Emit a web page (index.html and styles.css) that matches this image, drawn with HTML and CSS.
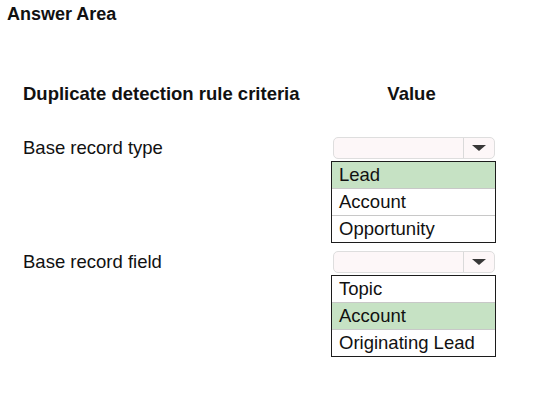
FILE: index.html
```html
<!DOCTYPE html>
<html>
<head>
    <title>Answer Area</title>
    <link rel="stylesheet" href="styles.css">
</head>
<body>
    <h1 class="answer-title">Answer Area</h1>

    <div class="criteria">
        <div class="criteria-head">Duplicate detection rule criteria</div>
        <div class="criteria-head value-head">Value</div>

        <div class="criteria-label">Base record type</div>
        <div class="picker">
            <div class="picker-box">
                <span class="picker-arrow"></span>
            </div>
            <ul class="picker-list">
                <li class="selected">Lead</li>
                <li>Account</li>
                <li>Opportunity</li>
            </ul>
        </div>

        <div class="criteria-label">Base record field</div>
        <div class="picker">
            <div class="picker-box">
                <span class="picker-arrow"></span>
            </div>
            <ul class="picker-list">
                <li>Topic</li>
                <li class="selected">Account</li>
                <li>Originating Lead</li>
            </ul>
        </div>
    </div>
</body>
</html>
```

FILE: styles.css
```css
body {
    margin: 0;
    font-family: 'Liberation Sans', Arial, sans-serif;
    color: #111;
    background: #fff;
}

.answer-title {
    margin: 0;
    padding: 4px 0 0 7px;
    font-size: 18px;
    line-height: 21px;
    font-weight: bold;
}

.criteria {
    display: grid;
    grid-template-columns: 308px 165px;
    row-gap: 8px;
    margin: 58px 0 0 23px;
    font-size: 18.5px;
    line-height: 21px;
}

.criteria-head {
    font-weight: bold;
    margin-bottom: 25px;
}

.value-head {
    text-align: center;
    padding-right: 4px;
}

.criteria-label {
    padding-top: 0;
}

.picker {
    display: flex;
    flex-direction: column;
    gap: 2px;
}

.picker-box {
    display: flex;
    justify-content: flex-end;
    height: 20px;
    margin: 0 1px 0 2px;
    border: 1px solid #dedede;
    border-radius: 5px;
    background: #fdf7f8;
}

.picker-arrow {
    display: flex;
    align-items: center;
    justify-content: center;
    width: 30px;
    border-left: 1px solid #dadada;
}

.picker-arrow::after {
    content: "";
    border-left: 7px solid transparent;
    border-right: 7px solid transparent;
    border-top: 6px solid #383838;
}

.picker-list {
    list-style: none;
    margin: 0;
    padding: 0;
    border: 1px solid #1c1c1c;
}

.picker-list li {
    height: 26px;
    line-height: 26px;
    padding-left: 7px;
    border-top: 1px solid #c8c8c8;
}

.picker-list li:first-child {
    border-top: none;
}

.picker-list .selected {
    background: #c6e2c4;
}
```
